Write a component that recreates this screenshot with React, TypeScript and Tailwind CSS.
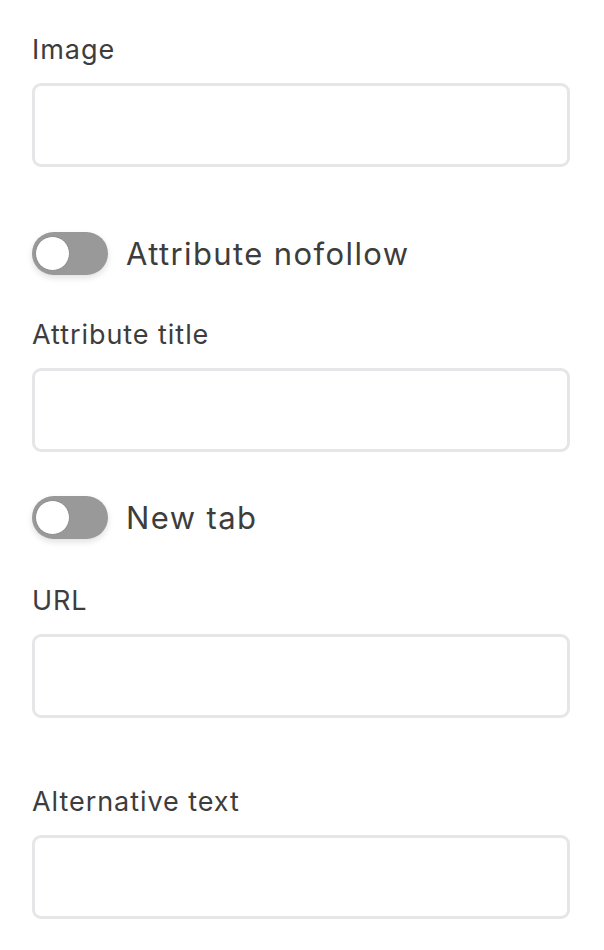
import { useState } from "react";

function Field({ label, className = "" }: { label: string; className?: string }) {
  return (
    <div className={className}>
      <label className="block text-[27px] leading-[32px] tracking-[0.035em] text-[#3d3d3d]">{label}</label>
      <input
        type="text"
        className="mt-[17px] block w-full h-[84px] rounded-[9px] border-[3px] border-[#e6e6e8] bg-white px-3 text-[26px] outline-none"
      />
    </div>
  );
}

function Toggle({ label, className = "" }: { label: string; className?: string }) {
  const [on, setOn] = useState(false);
  return (
    <div className={`flex items-center ${className}`}>
      <button
        type="button"
        onClick={() => setOn(!on)}
        className={`relative w-[76px] h-[43px] rounded-full shadow-[0_3px_6px_rgba(0,0,0,0.12)] ${
          on ? "bg-[#555]" : "bg-[#999999]"
        }`}
      >
        <span
          className={`absolute top-[4px] h-[35px] w-[35px] rounded-full bg-white border border-[#8a8a8a] ${
            on ? "left-[37px]" : "left-[3px]"
          }`}
        />
      </button>
      <span className="ml-[18px] text-[31px] leading-[43px] tracking-[0.045em] text-[#3d3d3d]">{label}</span>
    </div>
  );
}

export default function App() {
  return (
    <div className="min-h-[950px] bg-white pl-[32px] pr-[34px] pt-[34px] font-['Inter',sans-serif]">
      <Field label="Image" />
      <Toggle label="Attribute nofollow" className="mt-[65px]" />
      <Field label="Attribute title" className="mt-[44px]" />
      <Toggle label="New tab" className="mt-[44px]" />
      <Field label="URL" className="mt-[46px]" />
      <Field label="Alternative text" className="mt-[68px]" />
    </div>
  );
}
